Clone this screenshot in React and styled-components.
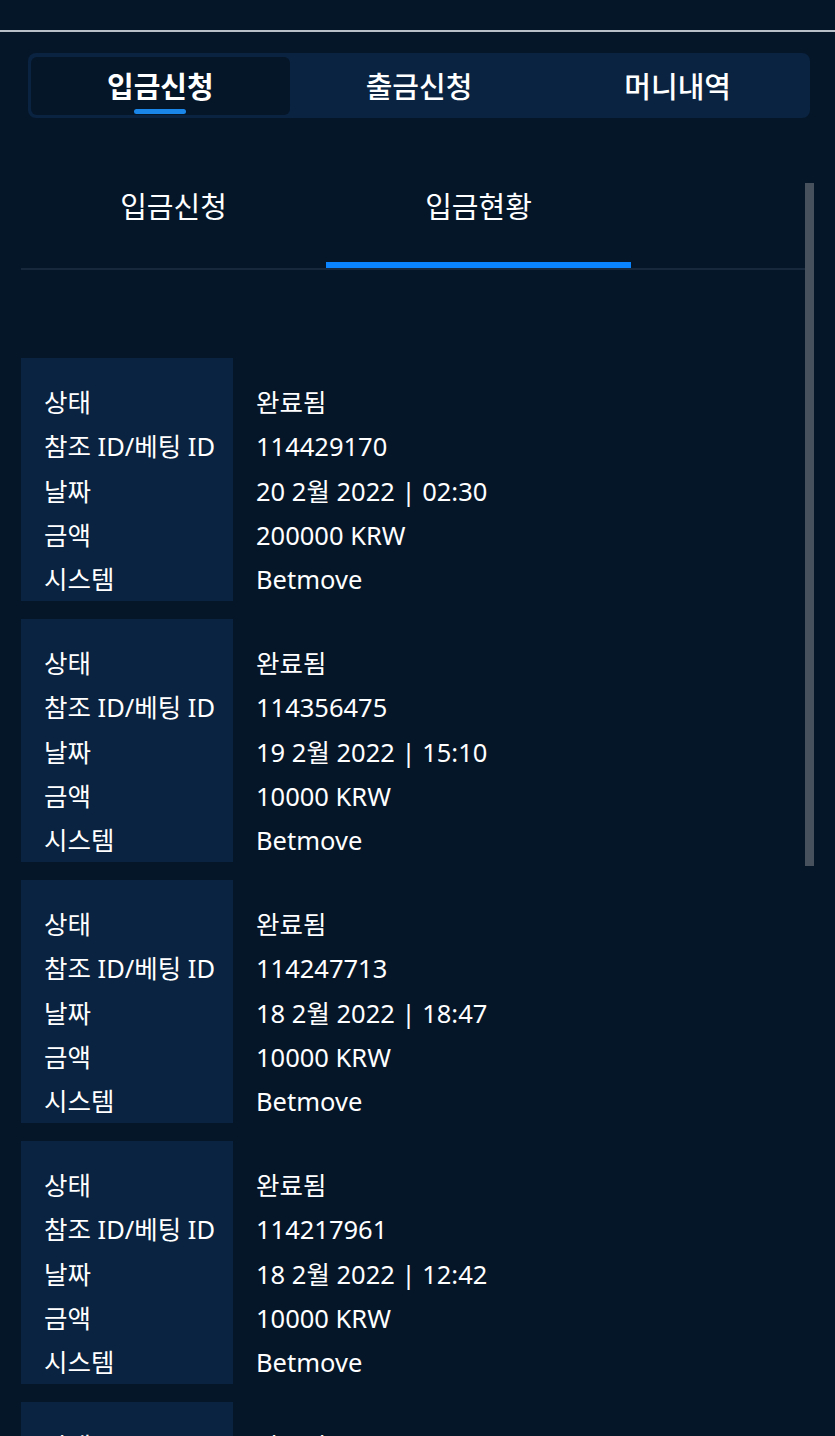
import styled, { createGlobalStyle } from 'styled-components'

const GlobalStyle = createGlobalStyle`
  body {
    margin: 0;
    background: #061629;
    font-family: "Noto Sans", "Noto Sans CJK KR", sans-serif;
    color: #fff;
  }
`;

const records = [
  { id: '114429170', date: '20 2월 2022 | 02:30', amount: '200000 KRW' },
  { id: '114356475', date: '19 2월 2022 | 15:10', amount: '10000 KRW' },
  { id: '114247713', date: '18 2월 2022 | 18:47', amount: '10000 KRW' },
  { id: '114217961', date: '18 2월 2022 | 12:42', amount: '10000 KRW' },
  { id: '114200000', date: '17 2월 2022 | 10:00', amount: '10000 KRW' },
];

const App = () => {
  return (
    <>
      <GlobalStyle />
      <Page>
        <TopBar />
        <Segment>
          <SegmentTab active>입금신청</SegmentTab>
          <SegmentTab>출금신청</SegmentTab>
          <SegmentTab>머니내역</SegmentTab>
        </Segment>
        <Content>
          <Scrollbar />
          <SubTabs>
            <SubTab>입금신청</SubTab>
            <SubTab active>입금현황</SubTab>
          </SubTabs>
          <List>
            {records.map((r) => (
              <Card key={r.id}>
                <Labels>
                  <Row>상태</Row>
                  <Row>참조 ID/베팅 ID</Row>
                  <Row>날짜</Row>
                  <Row>금액</Row>
                  <Row>시스템</Row>
                </Labels>
                <Values>
                  <Row>완료됨</Row>
                  <Row>{r.id}</Row>
                  <Row>{r.date}</Row>
                  <Row>{r.amount}</Row>
                  <Row>Betmove</Row>
                </Values>
              </Card>
            ))}
          </List>
        </Content>
      </Page>
    </>
  )
}
export default App

const Page = styled.div`
  height: 1436px;
  overflow: hidden;
`;

const TopBar = styled.div`
  height: 30px;
  border-bottom: 2px solid #b9c0c8;
`;

const Segment = styled.div`
  display: flex;
  margin: 21px 25px 0 28px;
  height: 65px;
  padding: 4px 3px 3px;
  box-sizing: border-box;
  background: #0a2340;
  border-radius: 8px;
`;

const SegmentTab = styled.div`
  position: relative;
  flex: 1;
  display: flex;
  align-items: center;
  justify-content: center;
  border-radius: 6px;
  background: ${(p) => (p.active ? '#061629' : 'transparent')};
  font-size: 29px;
  font-weight: ${(p) => (p.active ? 700 : 500)};
  font-family: "Noto Sans CJK KR", sans-serif;
  padding-bottom: 2px;
  &::after {
    content: '';
    display: ${(p) => (p.active ? 'block' : 'none')};
    position: absolute;
    left: 50%;
    bottom: 1px;
    width: 52px;
    height: 5px;
    margin-left: -26px;
    border-radius: 3px;
    background: #1a86e8;
  }
`;

const Content = styled.div`
  position: relative;
  padding: 22px 22px 0 21px;
`;

const Scrollbar = styled.div`
  position: absolute;
  right: 21px;
  top: 65px;
  width: 9px;
  height: 683px;
  background: #47515e;
`;

const SubTabs = styled.div`
  display: flex;
  border-bottom: 2px solid #17283c;
`;

const SubTab = styled.div`
  width: 305px;
  height: 128px;
  box-sizing: border-box;
  display: flex;
  align-items: center;
  justify-content: center;
  padding-top: 8px;
  font-family: "Noto Sans CJK KR", sans-serif;
  font-size: 29px;
  border-bottom: 6px solid ${(p) => (p.active ? '#0a84ff' : 'transparent')};
`;

const List = styled.div`
  display: flex;
  flex-direction: column;
  gap: 18px;
  margin-top: 88px;
`;

const Card = styled.div`
  display: flex;
  height: 243px;
  flex-shrink: 0;
`;

const Labels = styled.div`
  width: 212px;
  padding: 22px 0 0 23px;
  box-sizing: border-box;
  background: #0a2340;
`;

const Values = styled.div`
  padding: 22px 0 0 23px;
`;

const Row = styled.div`
  height: 44.25px;
  line-height: 44.25px;
  font-size: 25.5px;
  white-space: nowrap;
`;
